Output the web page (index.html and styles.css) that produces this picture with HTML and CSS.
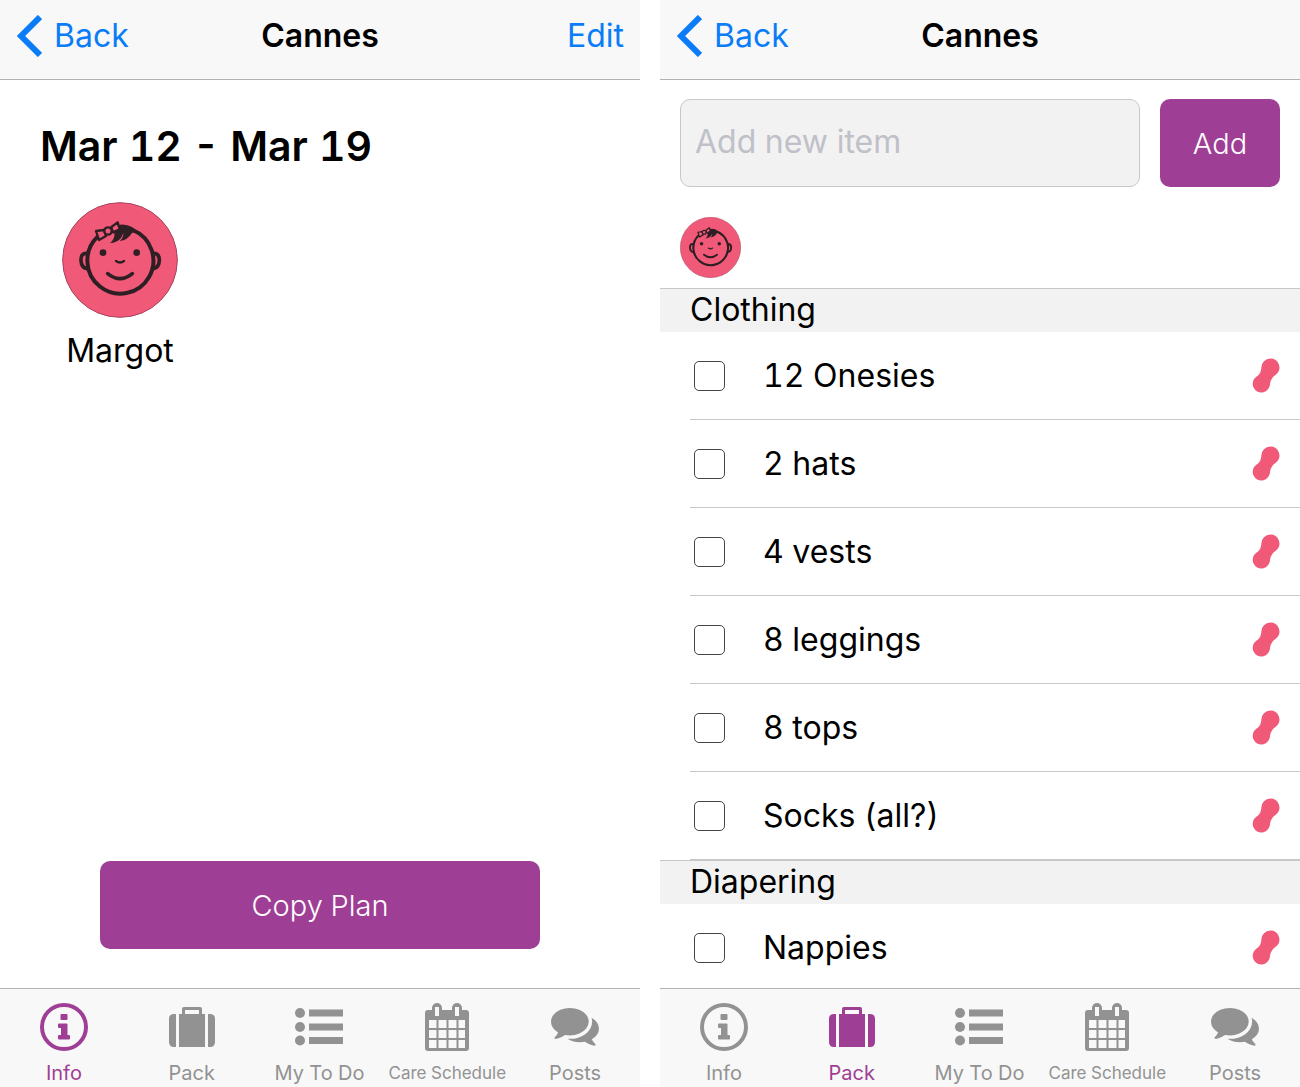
FILE: index.html
```
<!DOCTYPE html>
<html lang="en">
<head>
  <meta charset="UTF-8">
  <meta name="viewport" content="width=device-width, initial-scale=1">
  <title>Cannes</title>
  <link rel="stylesheet" href="styles.css">
</head>
<body>
  <!-- shared icons -->
  <svg class="sprite" aria-hidden="true">
    <symbol id="i-back" viewBox="0 0 26 42">
      <path d="M24 2 L5 21 L24 40" fill="none" stroke="currentColor" stroke-width="6"/>
    </symbol>

    <symbol id="i-baby" viewBox="36 36 348 348">
      <circle cx="210" cy="210" r="172" fill="#f05a78" stroke="#a8435c" stroke-width="3"/>
      <g fill="none" stroke="#2f1f24" stroke-width="12" stroke-linecap="round">
        <path d="M248 120 A99 99 0 1 1 143 140"/>
        <path d="M109 190 Q92 190 93 211 Q94 234 113 236" stroke-width="11"/>
        <path d="M311 190 Q328 190 328 211 Q327 234 307 236" stroke-width="11"/>
        <path d="M173 251 Q210 281 247 251" stroke-width="11"/>
        <path d="M198 213 Q210 222 222 213" stroke-width="7"/>
      </g>
      <g fill="#2f1f24">
        <circle cx="159" cy="188" r="10"/>
        <circle cx="260" cy="188" r="10"/>
        <path d="M190 108 Q222 97 246 111 L266 128 Q250 124 244 131 Q234 149 209 153 Q221 143 220 130 Q216 140 211 146 Q200 158 180 159 Q196 146 193 128 Z"/>
      </g>
      <g fill="#f05a78" stroke="#2f1f24" stroke-width="7" stroke-linejoin="round">
        <path d="M138 123 L162 120 L168 138 L147 150 Z"/>
        <path d="M184 111 L203 97 L209 118 L189 127 Z"/>
        <circle cx="174" cy="123" r="11"/>
      </g>
    </symbol>

    <symbol id="i-peanut" viewBox="336 818 84 104">
      <path d="M391 819 A27 27 0 0 1 408 867 Q393 876 390 895 A26 26 0 1 1 350 873 Q364 864 364 846 A27 27 0 0 1 391 819 Z" fill="#f05a78"/>
    </symbol>

    <symbol id="i-info" viewBox="0 0 48 48">
      <circle cx="24" cy="24" r="22" fill="none" stroke="currentColor" stroke-width="4"/>
      <path d="M21.5 11h5q1 0 1 1v4q0 1-1 1h-5q-1 0-1-1v-4q0-1 1-1zM19 20.500h7.500q1 0 1 1V32H29q1 0 1 1v2.500q0 1-1 1H19q-1 0-1-1V33q0-1 1-1h2v-7h-2q-1 0-1-1v-2.500q0-1 1-1z" fill="currentColor"/>
    </symbol>

    <symbol id="i-pack" viewBox="0 0 48 48">
      <path d="M8 11v33H6q-5 0-5-5V16q0-5 5-5zM40 11h2q5 0 5 5v23q0 5-5 5h-2zM11 11h3V6q0-2 2-2h16q2 0 2 2v5h3v33H11zM17 7v4h14V7z" fill="currentColor" fill-rule="evenodd"/>
    </symbol>

    <symbol id="i-list" viewBox="0 0 48 48">
      <g fill="currentColor">
        <circle cx="5" cy="10" r="5"/>
        <circle cx="5" cy="24" r="5"/>
        <circle cx="5" cy="37.500" r="5"/>
        <path d="M14 6.500h34v7H14zM14 20.500h34v7H14zM14 34h34v7H14z"/>
      </g>
    </symbol>

    <symbol id="i-calendar" viewBox="0 0 48 48">
      <path d="M5 7h4V5a5 5 0 0 1 10 0v2h10V5a5 5 0 0 1 10 0v2h4q3 0 3 3v35q0 3-3 3H5q-3 0-3-3V10q0-3 3-3zM12 4v9h4V4zM32 4v9h4V4zM6 17v8h7.500v-8zM15.500 17v8h8v-8zM25.500 17v8h8v-8zM35.500 17v8H42v-8zM6 27v8h7.500v-8zM15.500 27v8h8v-8zM25.500 27v8h8v-8zM35.500 27v8H42v-8zM6 37v8h7.500v-8zM15.500 37v8h8v-8zM25.500 37v8h8v-8zM35.500 37v8H42v-8z" fill="currentColor" fill-rule="evenodd"/>
    </symbol>

    <symbol id="i-posts" viewBox="0 70 1792 1792">
      <path fill="currentColor" d="M1408 768q0 139-94 257t-256.500 186.500-353.500 68.500q-86 0-176-16-124 88-278 128-36 9-86 16h-3q-11 0-20.500-8t-11.500-21q-1-3-1-6.500t.5-6.500 2-6l2.500-5 3.500-5.500 4-5 4.500-5 4-4.500q5-6 23-25t26-29.500 22.500-29 25-38.500 20.500-44q-124-72-195-177t-71-224q0-139 94-257t256.500-186.500 353.500-68.500 353.500 68.500 256.500 186.500 94 257zm384 256q0 120-71 224.500t-195 176.500q10 24 20.500 44t25 38.500 22.500 29 26 29.500 23 25q1 1 4 4.500t4.500 5 4 5 3.500 5.500l2.500 5 2 6 .5 6.500-1 6.500q-3 14-13 22t-22 7q-50-7-86-16-154-40-278-128-90 16-176 16-271 0-472-132 58 4 88 4 161 0 309-45t264-129q125-92 192-212t67-254q0-77-23-152 129 71 204 178t75 230z"/>
    </symbol>
  </svg>

  <div class="screens">
    <!-- Info screen -->
    <section class="screen">
      <header class="navbar">
        <a class="back" href="#"><svg><use href="#i-back"/></svg>Back</a>
        <h1>Cannes</h1>
        <a class="edit" href="#">Edit</a>
      </header>

      <main class="content info">
        <h2>Mar 12 - Mar 19</h2>
        <figure class="child">
          <svg class="avatar"><use href="#i-baby"/></svg>
          <figcaption>Margot</figcaption>
        </figure>
        <button class="btn copy" type="button">Copy Plan</button>
      </main>

      <nav class="tabbar">
        <a class="on" href="#"><svg><use href="#i-info"/></svg>Info</a>
        <a href="#"><svg><use href="#i-pack"/></svg>Pack</a>
        <a href="#"><svg><use href="#i-list"/></svg>My To Do</a>
        <a class="long" href="#"><svg><use href="#i-calendar"/></svg>Care Schedule</a>
        <a href="#"><svg><use href="#i-posts"/></svg>Posts</a>
      </nav>
    </section>

    <!-- Pack screen -->
    <section class="screen">
      <header class="navbar">
        <a class="back" href="#"><svg><use href="#i-back"/></svg>Back</a>
        <h1>Cannes</h1>
      </header>

      <main class="content pack">
        <form class="add">
          <input type="text" placeholder="Add new item" aria-label="Add new item">
          <button class="btn" type="button">Add</button>
        </form>
        <svg class="avatar small" role="img" aria-label="Margot"><use href="#i-baby"/></svg>

        <h3>Clothing</h3>
        <ul class="items">
          <li><label><input type="checkbox">12 Onesies</label><svg><use href="#i-peanut"/></svg></li>
          <li><label><input type="checkbox">2 hats</label><svg><use href="#i-peanut"/></svg></li>
          <li><label><input type="checkbox">4 vests</label><svg><use href="#i-peanut"/></svg></li>
          <li><label><input type="checkbox">8 leggings</label><svg><use href="#i-peanut"/></svg></li>
          <li><label><input type="checkbox">8 tops</label><svg><use href="#i-peanut"/></svg></li>
          <li><label><input type="checkbox">Socks (all?)</label><svg><use href="#i-peanut"/></svg></li>
        </ul>

        <h3>Diapering</h3>
        <ul class="items">
          <li><label><input type="checkbox">Nappies</label><svg><use href="#i-peanut"/></svg></li>
        </ul>
      </main>

      <nav class="tabbar">
        <a href="#"><svg><use href="#i-info"/></svg>Info</a>
        <a class="on" href="#"><svg><use href="#i-pack"/></svg>Pack</a>
        <a href="#"><svg><use href="#i-list"/></svg>My To Do</a>
        <a class="long" href="#"><svg><use href="#i-calendar"/></svg>Care Schedule</a>
        <a href="#"><svg><use href="#i-posts"/></svg>Posts</a>
      </nav>
    </section>
  </div>
</body>
</html>
```
FILE: styles.css
```
*{
  box-sizing: border-box;
}

body{
  margin: 0;
  background-color: #fff;
  color: #000;
  font-family: Inter, "Liberation Sans", sans-serif;
  font-size: 32px;
  font-variant-numeric: tabular-nums; /* equal width digits */
}

h1, h2, h3, ul, figure{
  margin: 0;
  padding: 0;
}
ul{
  list-style: none;
}
a{
  color: #0a7cf8;
  text-decoration: none;
}
button, input{
  font: inherit;
}

.sprite{
  display: none;
}

/* two phone screens side by side */
.screens{
  display: grid;
  grid-template-columns: 1fr 1fr;
  gap: 20px;
  height: 100vh;
}
.screen{
  display: flex;
  flex-direction: column;
  min-width: 0;
  min-height: 0;
}

/* top bar */
.navbar{
  display: grid;
  grid-template-columns: 1fr auto 1fr;
  align-items: center;
  flex: none;
  height: 80px;
  padding: 0 16px 8px;
  border-bottom: 1px solid #b2b2b2;
  background-color: #f8f8f8;
}
.navbar h1{
  font-size: 32px;
  font-weight: 600;
}
.back{
  display: flex;
  align-items: center;
  gap: 12px;
}
.back svg{
  width: 26px;
  height: 42px;
}
.edit{
  justify-self: end;
}

.content{
  display: flex;
  flex-direction: column;
  flex: 1;
  min-height: 0;
  overflow-y: auto;
  scrollbar-width: none;
}

.btn{
  height: 88px;
  padding: 0;
  border: none;
  border-radius: 10px;
  background-color: #9f3e95;
  color: #fff;
  font-size: 29px;
  font-weight: 300;
  cursor: pointer;
}

/* info */
.info{
  padding: 40px 40px 39px;
}
.info h2{
  font-size: 41px;
  font-weight: 600;
  line-height: 52px;
}
.child{
  width: 160px;
  margin-top: 30px;
  text-align: center;
}
.avatar{
  display: block;
  width: 116px;
  height: 116px;
  margin: 0 auto;
}
.child figcaption{
  margin-top: 12px;
  line-height: 42px;
}
.copy{
  margin: auto 60px 0;
}

/* packing list */
.add{
  display: flex;
  gap: 20px;
  padding: 19px 20px 30px;
}
.add input{
  flex: 1;
  min-width: 0;
  height: 88px;
  padding: 0 14px 4px;
  border: 1px solid #c8c8c8;
  border-radius: 10px;
  background-color: #f2f2f2;
}
.add input::placeholder{
  color: #c0c0c8;
  opacity: 1;
}
.add .btn{
  width: 120px;
}
.avatar.small{
  flex: none;
  width: 61px;
  height: 61px;
  margin: 0 20px 10px;
}
.pack h3{
  flex: none;
  height: 44px;
  padding-left: 30px;
  border-top: 1px solid #c8c8c8;
  background-color: #f2f2f2;
  font-size: 32px;
  font-weight: 400;
  line-height: 42px;
}
.items{
  flex: none;
  padding-left: 30px;
}
.items li{
  display: flex;
  align-items: center;
  justify-content: space-between;
  height: 88px;
  padding: 0 20px 0 4px;
  border-bottom: 1px solid #c8c8c8;
}
.items label{
  display: flex;
  align-items: center;
  gap: 38px;
}
.items input{
  width: 31px;
  height: 30px;
  margin: 0;
  border: 1px solid #444;
  border-radius: 5px;
  background-color: #fff;
  appearance: none;
}
.items input:checked{
  background-color: #9f3e95;
}
.items svg{
  width: 28px;
  height: 35px;
}

/* bottom tabs */
.tabbar{
  display: grid;
  grid-template-columns: repeat(5, minmax(0, 1fr));
  flex: none;
  height: 99px;
  padding: 14px 1px 0 0;
  border-top: 1px solid #b2b2b2;
  background-color: #f8f8f8;
}
.tabbar a{
  display: flex;
  flex-direction: column;
  align-items: center;
  gap: 10px;
  color: #929292;
  font-size: 20px;
  line-height: 24px;
  white-space: nowrap;
}
.tabbar svg{
  width: 48px;
  height: 48px;
}
.tabbar .on{
  color: #9f3e95;
}
.tabbar .long{
  font-size: 17px;
}
```
